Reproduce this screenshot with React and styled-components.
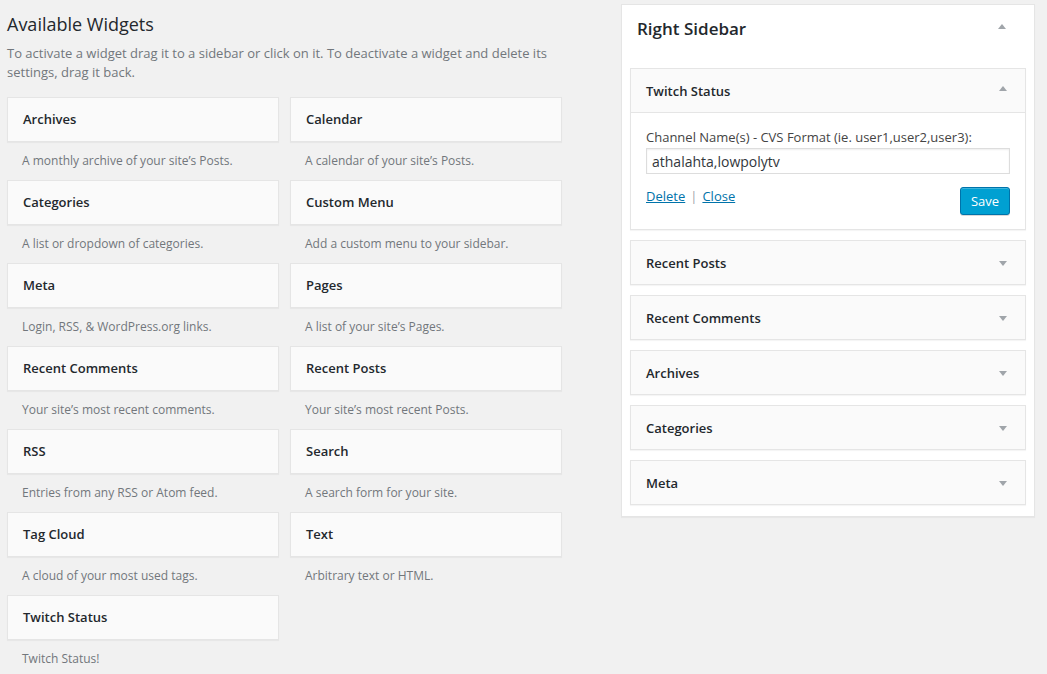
import React from 'react'
import styled, { createGlobalStyle } from 'styled-components'

const GlobalStyle = createGlobalStyle`
  html, body {
    margin: 0;
    padding: 0;
    background: #f1f1f1;
    font-family: "Open Sans", "Liberation Sans", sans-serif;
    color: #23282d;
  }
`

const Page = styled.div`
  display: flex;
  align-items: flex-start;
  padding: 0 12px 0 7px;
`

// left : available widgets
const Available = styled.div`
  width: 555px;
`
const Heading = styled.h2`
  margin: 11px 0 0;
  font-size: 18px;
  font-weight: 500;
  line-height: 26px;
  color: #23282d;
`
const Intro = styled.p`
  margin: 7px 0 15px;
  font-size: 13px;
  line-height: 19px;
  color: #72777c;
  width: 555px;
`
const Grid = styled.div`
  display: grid;
  grid-template-columns: 272px 272px;
  column-gap: 11px;
`
const Item = styled.div`
  height: 83px;
`
const Card = styled.div`
  box-sizing: border-box;
  height: 45px;
  display: flex;
  align-items: center;
  padding: 0 15px 1px;
  background: #fafafa;
  border: 1px solid #e5e5e5;
  box-shadow: 0 1px 1px rgba(0, 0, 0, 0.04);
  font-size: 13px;
  font-weight: 600;
  color: #23282d;
`
const ItemDesc = styled.div`
  padding: 11px 15px 0;
  font-size: 12px;
  line-height: 16px;
  color: #72777c;
`

// right : sidebar
const Sidebar = styled.div`
  margin: 4px 0 0 59px;
  width: 414px;
  box-sizing: border-box;
  background: #fff;
  border: 1px solid #e5e5e5;
  box-shadow: 0 1px 1px rgba(0, 0, 0, 0.04);
  padding: 0 8px 11px;
`
const SidebarHead = styled.div`
  display: flex;
  align-items: center;
  justify-content: space-between;
  height: 47px;
  padding: 0 20px 16px 7px;
  h3 {
    margin: 0;
    font-size: 17px;
    font-weight: 600;
    color: #23282d;
  }
`
const Arrow = styled.span`
  width: 0;
  height: 0;
  border-left: 4px solid transparent;
  border-right: 4px solid transparent;
  ${p => p.up ? 'border-bottom: 5px solid #a0a5aa;' : 'border-top: 5px solid #a0a5aa;'}
  margin-top: ${p => p.up ? '-4px' : '2px'};
`
const Widget = styled.div`
  border: 1px solid #e5e5e5;
  background: #fafafa;
  box-shadow: 0 1px 1px rgba(0, 0, 0, 0.04);
  margin-bottom: 10px;
  &:last-child { margin-bottom: 0; }
`
const WidgetTop = styled.div`
  display: flex;
  align-items: center;
  justify-content: space-between;
  height: 43px;
  padding: 0 18px 0 15px;
  font-size: 13px;
  font-weight: 600;
  line-height: 18px;
  border-bottom: ${p => p.open ? '1px solid #e5e5e5' : 'none'};
`
const WidgetBody = styled.div`
  background: #fff;
  padding: 16px 15px 14px;
`
const Label = styled.label`
  display: block;
  font-size: 13px;
  line-height: 17px;
  color: #444;
`
const Input = styled.input`
  display: block;
  box-sizing: border-box;
  width: 100%;
  height: 26px;
  margin-top: 2px;
  padding: 0 5px;
  border: 1px solid #ddd;
  box-shadow: inset 0 1px 2px rgba(0, 0, 0, 0.07);
  font-family: "Open Sans", "Liberation Sans", sans-serif;
  font-size: 14px;
  color: #32373c;
  outline: none;
`
const Actions = styled.div`
  display: flex;
  justify-content: space-between;
  align-items: flex-start;
  margin-top: 13px;
`
const Links = styled.div`
  font-size: 13px;
  color: #a0a5aa;
  a {
    color: #0073aa;
    text-decoration: underline;
  }
  span { margin: 0 5px; }
`
const SaveButton = styled.button`
  width: 50px;
  height: 28px;
  background: #00a0d2;
  border: 1px solid #0073aa;
  border-radius: 3px;
  box-shadow: inset 0 1px 0 rgba(120, 200, 230, 0.5), 0 1px 0 rgba(0, 0, 0, 0.15);
  color: #fff;
  font-family: "Open Sans", "Liberation Sans", sans-serif;
  font-size: 13px;
  padding: 0;
`

const available = [
  ['Archives', 'A monthly archive of your site\u2019s Posts.'],
  ['Calendar', 'A calendar of your site\u2019s Posts.'],
  ['Categories', 'A list or dropdown of categories.'],
  ['Custom Menu', 'Add a custom menu to your sidebar.'],
  ['Meta', 'Login, RSS, & WordPress.org links.'],
  ['Pages', 'A list of your site\u2019s Pages.'],
  ['Recent Comments', 'Your site\u2019s most recent comments.'],
  ['Recent Posts', 'Your site\u2019s most recent Posts.'],
  ['RSS', 'Entries from any RSS or Atom feed.'],
  ['Search', 'A search form for your site.'],
  ['Tag Cloud', 'A cloud of your most used tags.'],
  ['Text', 'Arbitrary text or HTML.'],
  ['Twitch Status', 'Twitch Status!'],
]

const collapsed = ['Recent Posts', 'Recent Comments', 'Archives', 'Categories', 'Meta']

const App = () => {
  return (
    <>
      <GlobalStyle />
      <Page>
        <Available>
          <Heading>Available Widgets</Heading>
          <Intro>To activate a widget drag it to a sidebar or click on it. To deactivate a widget and delete its settings, drag it back.</Intro>
          <Grid>
            {available.map(([title, desc]) => (
              <Item key={title}>
                <Card>{title}</Card>
                <ItemDesc>{desc}</ItemDesc>
              </Item>
            ))}
          </Grid>
        </Available>

        <Sidebar>
          <SidebarHead>
            <h3>Right Sidebar</h3>
            <Arrow up />
          </SidebarHead>
          <Widget>
            <WidgetTop open>
              Twitch Status
              <Arrow up />
            </WidgetTop>
            <WidgetBody>
              <Label>Channel Name(s) - CVS Format (ie. user1,user2,user3):</Label>
              <Input defaultValue="athalahta,lowpolytv" />
              <Actions>
                <Links>
                  <a href="#">Delete</a><span>|</span><a href="#">Close</a>
                </Links>
                <SaveButton>Save</SaveButton>
              </Actions>
            </WidgetBody>
          </Widget>
          {collapsed.map(name => (
            <Widget key={name}>
              <WidgetTop>
                {name}
                <Arrow />
              </WidgetTop>
            </Widget>
          ))}
        </Sidebar>
      </Page>
    </>
  )
}

export default App
